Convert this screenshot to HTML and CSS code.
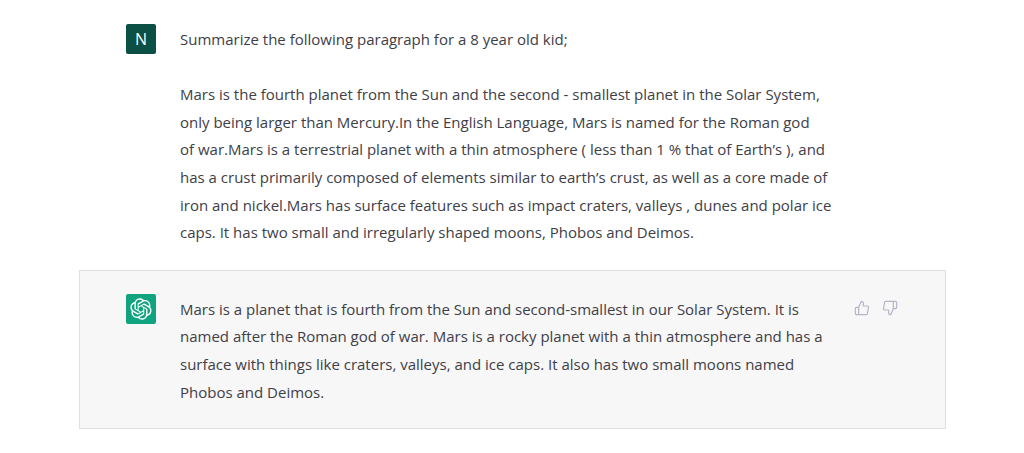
FILE: index.html
```html
<!DOCTYPE html>
<html lang="en">
<head>
<meta charset="utf-8">
<title>Summary</title>
<link rel="stylesheet" href="styles.css">
</head>
<body>
<main class="chat">
  <section class="row row-user">
    <div class="avatar avatar-user">N</div>
    <div class="text">
      <p class="para">Summarize the following paragraph for a 8 year old kid;</p>
      <p class="para">Mars is the fourth planet from the Sun and the second - smallest planet in the Solar System,<br>only being larger than Mercury.In the English Language, Mars is named for the Roman god<br>of war.Mars is a terrestrial planet with a thin atmosphere ( less than 1 % that of Earth’s ), and<br>has a crust primarily composed of elements similar to earth’s crust, as well as a core made of<br>iron and nickel.Mars has surface features such as impact craters, valleys , dunes and polar ice<br>caps. It has two small and irregularly shaped moons, Phobos and Deimos.</p>
    </div>
  </section>
  <section class="row row-bot">
    <div class="avatar avatar-bot">
      <svg class="logo" viewBox="0 0 41 41" aria-hidden="true"><path fill="currentColor" d="M37.5324 16.8707C37.9808 15.5241 38.1363 14.0974 37.9886 12.6859C37.8409 11.2744 37.3934 9.91076 36.676 8.68622C35.6126 6.83404 33.9882 5.3676 32.0373 4.4985C30.0864 3.62941 27.9098 3.40259 25.8215 3.85078C24.8796 2.7893 23.7219 1.94125 22.4257 1.36341C21.1295 0.785575 19.7249 0.491269 18.3058 0.500197C16.1708 0.495044 14.0893 1.16803 12.3614 2.42214C10.6335 3.67624 9.34853 5.44666 8.6917 7.47815C7.30085 7.76286 5.98686 8.3414 4.8377 9.17505C3.68854 10.0087 2.73073 11.0782 2.02839 12.312C0.956464 14.1591 0.498905 16.2988 0.721698 18.4228C0.944492 20.5467 1.83612 22.5449 3.268 24.1293C2.81966 25.4759 2.66413 26.9026 2.81182 28.3141C2.95951 29.7256 3.40701 31.0892 4.12437 32.3138C5.18791 34.1659 6.8123 35.6322 8.76321 36.5013C10.7141 37.3704 12.8907 37.5973 14.9789 37.1492C15.9208 38.2107 17.0786 39.0587 18.3747 39.6366C19.6709 40.2144 21.0755 40.5087 22.4946 40.4998C24.6307 40.5054 26.7133 39.8321 28.4418 38.5772C30.1704 37.3223 31.4556 35.5506 32.1119 33.5179C33.5027 33.2332 34.8167 32.6547 35.9659 31.821C37.115 30.9874 38.0728 29.9178 38.7752 28.684C39.8458 26.8371 40.3023 24.6979 40.0789 22.5748C39.8556 20.4517 38.9639 18.4544 37.5324 16.8707ZM22.4978 37.8849C20.7443 37.8874 19.0459 37.2733 17.6994 36.1501C17.7601 36.117 17.8666 36.0586 17.936 36.0161L25.9004 31.4156C26.1003 31.3019 26.2663 31.137 26.3813 30.9378C26.4964 30.7386 26.5563 30.5124 26.5549 30.2825V19.0542L29.9213 20.998C29.9389 21.0068 29.9541 21.0198 29.9656 21.0359C29.977 21.052 29.9842 21.0707 29.9867 21.0902V30.3889C29.9842 32.375 29.1946 34.2791 27.7909 35.6841C26.3872 37.0892 24.4838 37.8806 22.4978 37.8849ZM6.39227 31.0064C5.51397 29.4888 5.19742 27.7107 5.49804 25.9832C5.55718 26.0187 5.66048 26.0818 5.73461 26.1244L13.699 30.7248C13.8975 30.8408 14.1233 30.902 14.3532 30.902C14.583 30.902 14.8088 30.8408 15.0073 30.7248L24.731 25.1103V28.9979C24.7321 29.0177 24.7283 29.0376 24.7199 29.0556C24.7115 29.0736 24.6988 29.0893 24.6829 29.1012L16.6317 33.7497C14.9096 34.7416 12.8643 35.0097 10.9447 34.4954C9.02506 33.9811 7.38785 32.7263 6.39227 31.0064ZM4.29707 13.6194C5.17156 12.0998 6.55279 10.9364 8.19885 10.3327C8.19885 10.4013 8.19491 10.5228 8.19491 10.6071V19.808C8.19351 20.0378 8.25334 20.2638 8.36823 20.4629C8.48312 20.6619 8.64893 20.8267 8.84863 20.9404L18.5723 26.5542L15.206 28.4979C15.1894 28.5089 15.1703 28.5155 15.1505 28.5173C15.1307 28.5191 15.1107 28.516 15.0924 28.5082L7.04046 23.8557C5.32135 22.8601 4.06716 21.2235 3.55289 19.3046C3.03862 17.3858 3.30624 15.3413 4.29707 13.6194ZM31.955 20.0556L22.2312 14.4411L25.5976 12.4981C25.6142 12.4872 25.6333 12.4805 25.6531 12.4787C25.6729 12.4769 25.6928 12.4801 25.7111 12.4879L33.7631 17.1364C34.9967 17.849 36.0017 18.8982 36.6606 20.1613C37.3194 21.4244 37.6047 22.849 37.4832 24.2684C37.3617 25.6878 36.8382 27.0432 35.9743 28.1759C35.1103 29.3086 33.9415 30.1717 32.6047 30.6641C32.6047 30.5947 32.6047 30.4733 32.6047 30.3889V21.188C32.6066 20.9586 32.5474 20.7328 32.4332 20.5338C32.319 20.3348 32.154 20.1698 31.955 20.0556ZM35.3055 15.0128C35.2464 14.9765 35.1431 14.9142 35.069 14.8717L27.1045 10.2712C26.906 10.1554 26.6803 10.0943 26.4504 10.0943C26.2206 10.0943 25.9948 10.1554 25.7963 10.2712L16.0726 15.8858V11.9982C16.0715 11.9783 16.0753 11.9585 16.0837 11.9405C16.0921 11.9225 16.1048 11.9068 16.1207 11.8949L24.1719 7.25025C25.4053 6.53903 26.8158 6.19376 28.2383 6.25482C29.6608 6.31589 31.0364 6.78077 32.2044 7.59508C33.3723 8.40939 34.2842 9.53945 34.8334 10.8531C35.3826 12.1667 35.5464 13.6095 35.3055 15.0128ZM14.2424 21.9419L10.8752 19.9981C10.8576 19.9893 10.8423 19.9763 10.8309 19.9602C10.8195 19.9441 10.8122 19.9254 10.8098 19.9058V10.6071C10.8107 9.18295 11.2173 7.78848 11.9819 6.58696C12.7466 5.38544 13.8377 4.42659 15.1275 3.82264C16.4173 3.21869 17.8524 2.99464 19.2649 3.1767C20.6775 3.35876 22.0089 3.93941 23.1034 4.85067C23.0427 4.88379 22.937 4.94215 22.8668 4.98473L14.9024 9.58517C14.7025 9.69878 14.5366 9.86356 14.4215 10.0626C14.3065 10.2616 14.2466 10.4877 14.2479 10.7175L14.2424 21.9419ZM16.071 17.9991L20.4018 15.4978L24.7325 17.9975V22.9985L20.4018 25.4983L16.071 22.9985V17.9991Z"/></svg>
    </div>
    <div class="text">
      <p class="para">Mars is a planet that is fourth from the Sun and second-smallest in our Solar System. It is<br>named after the Roman god of war. Mars is a rocky planet with a thin atmosphere and has a<br>surface with things like craters, valleys, and ice caps. It also has two small moons named<br>Phobos and Deimos.</p>
    </div>
    <div class="actions">
      <svg class="thumb" viewBox="0 0 24 24" aria-hidden="true"><path d="M14 9V5a3 3 0 0 0-3-3l-4 9v11h11.28a2 2 0 0 0 2-1.7l1.38-9a2 2 0 0 0-2-2.3zM7 22H4a2 2 0 0 1-2-2v-7a2 2 0 0 1 2-2h3"/></svg>
      <svg class="thumb" viewBox="0 0 24 24" aria-hidden="true"><path d="M10 15v4a3 3 0 0 0 3 3l4-9V2H5.72a2 2 0 0 0-2 1.7l-1.38 9a2 2 0 0 0 2 2.3zm7-13h2.67A2.31 2.31 0 0 1 22 4v7a2.31 2.31 0 0 1-2.33 2H17"/></svg>
    </div>
  </section>
</main>
</body>
</html>
```

FILE: styles.css
```css
* {
  box-sizing: border-box;
}

html,
body {
  margin: 0;
  background: #ffffff;
}

body {
  font-family: "Open Sans", "Noto Sans", "Liberation Sans", sans-serif;
  font-size: 15px;
  line-height: 27.6px;
  color: #3e4048;
  overflow: hidden;
}

.chat {
  width: 867px;
  margin-left: 79px;
  padding-top: 24px;
}

.row {
  display: flex;
  align-items: flex-start;
  gap: 24px;
  padding-left: 47px;
}

.row-user {
  padding-bottom: 23px;
}

.row-bot {
  position: relative;
  height: 159px;
  padding-top: 23px;
  padding-left: 46px;
  background: #f7f7f7;
  border: 1px solid #dfe0e5;
}

.avatar {
  flex: none;
  display: flex;
  align-items: center;
  justify-content: center;
  width: 30px;
  height: 30px;
  border-radius: 2px;
  color: #ffffff;
}

.avatar-user {
  background: #0b4f45;
  font-size: 16px;
  font-weight: 500;
  line-height: 1;
}

.avatar-bot {
  background: #10a37f;
}

.logo {
  width: 22px;
  height: 22px;
}

.text {
  flex: none;
  margin-top: 2px;
  white-space: nowrap;
}

.para {
  margin: 0 0 27.6px;
}

.para:last-child {
  margin-bottom: 0;
}

.actions {
  position: absolute;
  top: 29px;
  right: 47px;
  display: flex;
  gap: 12px;
}

.thumb {
  width: 16px;
  height: 16px;
  fill: none;
  stroke: #b4b4c8;
  stroke-width: 1.8;
  stroke-linecap: round;
  stroke-linejoin: round;
}
```
